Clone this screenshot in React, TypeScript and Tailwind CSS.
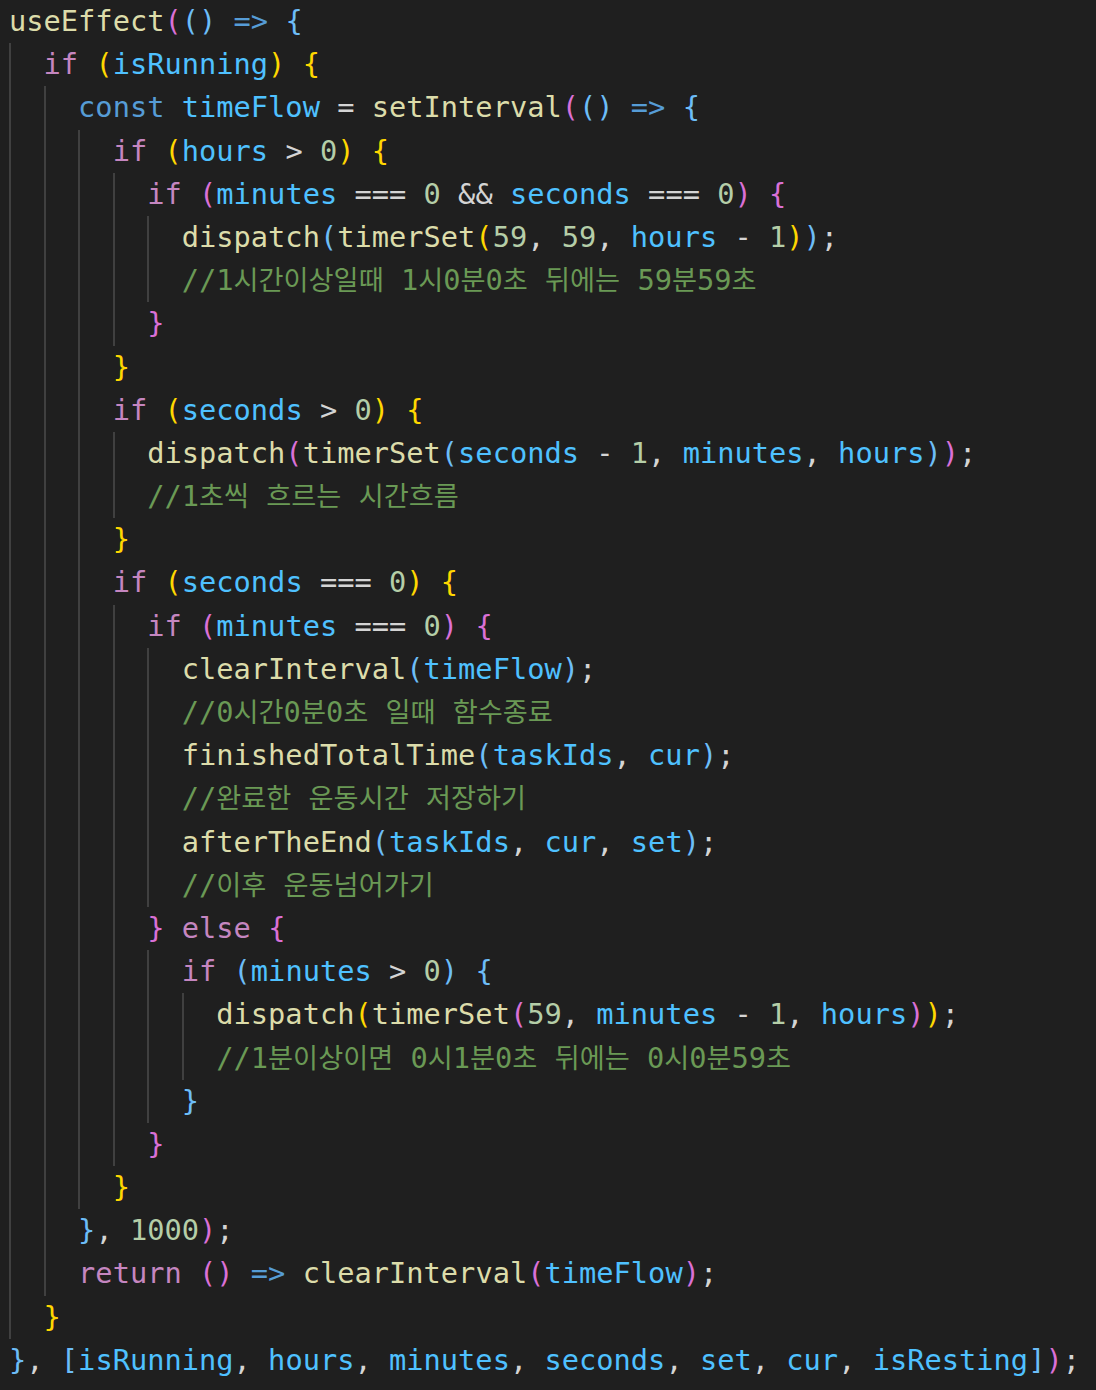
import React from "react";

type Tok = [string, string];
type Line = { i: number; t: Tok[] };

const CLS: Record<string, string> = {
  k: "text-[#C586C0]",
  s: "text-[#569CD6]",
  v: "text-[#4FC1FF]",
  f: "text-[#DCDCAA]",
  n: "text-[#B5CEA8]",
  c: "text-[#6A9955]",
  p: "text-[#D4D4D4]",
  g: "text-[#FFD700]",
  o: "text-[#DA70D6]",
  b: "text-[#6DBDF7]",
};

const lines: Line[] = [
  { i: 0, t: [["f", "useEffect"], ["o", "("], ["b", "()"], ["p", " "], ["s", "=>"], ["p", " "], ["b", "{"]] },
  { i: 1, t: [["k", "if"], ["p", " "], ["g", "("], ["v", "isRunning"], ["g", ")"], ["p", " "], ["g", "{"]] },
  { i: 2, t: [["s", "const"], ["p", " "], ["v", "timeFlow"], ["p", " = "], ["f", "setInterval"], ["o", "("], ["b", "()"], ["p", " "], ["s", "=>"], ["p", " "], ["b", "{"]] },
  { i: 3, t: [["k", "if"], ["p", " "], ["g", "("], ["v", "hours"], ["p", " > "], ["n", "0"], ["g", ")"], ["p", " "], ["g", "{"]] },
  { i: 4, t: [["k", "if"], ["p", " "], ["o", "("], ["v", "minutes"], ["p", " === "], ["n", "0"], ["p", " && "], ["v", "seconds"], ["p", " === "], ["n", "0"], ["o", ")"], ["p", " "], ["o", "{"]] },
  { i: 5, t: [["f", "dispatch"], ["b", "("], ["f", "timerSet"], ["g", "("], ["n", "59"], ["p", ", "], ["n", "59"], ["p", ", "], ["v", "hours"], ["p", " - "], ["n", "1"], ["g", ")"], ["b", ")"], ["p", ";"]] },
  { i: 5, t: [["c", "//1시간이상일때 1시0분0초 뒤에는 59분59초"]] },
  { i: 4, t: [["o", "}"]] },
  { i: 3, t: [["g", "}"]] },
  { i: 3, t: [["k", "if"], ["p", " "], ["g", "("], ["v", "seconds"], ["p", " > "], ["n", "0"], ["g", ")"], ["p", " "], ["g", "{"]] },
  { i: 4, t: [["f", "dispatch"], ["o", "("], ["f", "timerSet"], ["b", "("], ["v", "seconds"], ["p", " - "], ["n", "1"], ["p", ", "], ["v", "minutes"], ["p", ", "], ["v", "hours"], ["b", ")"], ["o", ")"], ["p", ";"]] },
  { i: 4, t: [["c", "//1초씩 흐르는 시간흐름"]] },
  { i: 3, t: [["g", "}"]] },
  { i: 3, t: [["k", "if"], ["p", " "], ["g", "("], ["v", "seconds"], ["p", " === "], ["n", "0"], ["g", ")"], ["p", " "], ["g", "{"]] },
  { i: 4, t: [["k", "if"], ["p", " "], ["o", "("], ["v", "minutes"], ["p", " === "], ["n", "0"], ["o", ")"], ["p", " "], ["o", "{"]] },
  { i: 5, t: [["f", "clearInterval"], ["b", "("], ["v", "timeFlow"], ["b", ")"], ["p", ";"]] },
  { i: 5, t: [["c", "//0시간0분0초 일때 함수종료"]] },
  { i: 5, t: [["f", "finishedTotalTime"], ["b", "("], ["v", "taskIds"], ["p", ", "], ["v", "cur"], ["b", ")"], ["p", ";"]] },
  { i: 5, t: [["c", "//완료한 운동시간 저장하기"]] },
  { i: 5, t: [["f", "afterTheEnd"], ["b", "("], ["v", "taskIds"], ["p", ", "], ["v", "cur"], ["p", ", "], ["v", "set"], ["b", ")"], ["p", ";"]] },
  { i: 5, t: [["c", "//이후 운동넘어가기"]] },
  { i: 4, t: [["o", "}"], ["p", " "], ["k", "else"], ["p", " "], ["o", "{"]] },
  { i: 5, t: [["k", "if"], ["p", " "], ["b", "("], ["v", "minutes"], ["p", " > "], ["n", "0"], ["b", ")"], ["p", " "], ["b", "{"]] },
  { i: 6, t: [["f", "dispatch"], ["g", "("], ["f", "timerSet"], ["o", "("], ["n", "59"], ["p", ", "], ["v", "minutes"], ["p", " - "], ["n", "1"], ["p", ", "], ["v", "hours"], ["o", ")"], ["g", ")"], ["p", ";"]] },
  { i: 6, t: [["c", "//1분이상이면 0시1분0초 뒤에는 0시0분59초"]] },
  { i: 5, t: [["b", "}"]] },
  { i: 4, t: [["o", "}"]] },
  { i: 3, t: [["g", "}"]] },
  { i: 2, t: [["b", "}"], ["p", ", "], ["n", "1000"], ["o", ")"], ["p", ";"]] },
  { i: 2, t: [["k", "return"], ["p", " "], ["o", "()"], ["p", " "], ["s", "=>"], ["p", " "], ["f", "clearInterval"], ["o", "("], ["v", "timeFlow"], ["o", ")"], ["p", ";"]] },
  { i: 1, t: [["g", "}"]] },
  { i: 0, t: [["b", "}"], ["p", ", "], ["b", "["], ["v", "isRunning"], ["p", ", "], ["v", "hours"], ["p", ", "], ["v", "minutes"], ["p", ", "], ["v", "seconds"], ["p", ", "], ["v", "set"], ["p", ", "], ["v", "cur"], ["p", ", "], ["v", "isResting"], ["b", "]"], ["o", ")"], ["p", ";"]] },
];

function renderText(text: string) {
  const parts = text.split(/([\uAC00-\uD7A3]+)/);
  return parts.map((part, idx) =>
    /[\uAC00-\uD7A3]/.test(part) ? (
      <span key={idx} className="text-[27.2px]">
        {part}
      </span>
    ) : (
      <React.Fragment key={idx}>{part}</React.Fragment>
    )
  );
}

export default function App() {
  return (
    <div
      className="w-[1096px] h-[1390px] bg-[#1f1f1f] overflow-hidden"
      style={{ fontFamily: '"DejaVu Sans Mono", "Noto Sans CJK KR", monospace' }}
    >
      <div className="flex flex-col pl-[9px]">
        {lines.map((line, li) => (
          <div key={li} className="flex h-[43.2px] items-stretch">
            {Array.from({ length: line.i }).map((_, k) => (
              <span
                key={k}
                className="w-[34.56px] shrink-0 border-l-2 border-[#404040] box-border"
              />
            ))}
            <span className="whitespace-pre text-[28.7px] leading-[43.2px]">
              {line.t.map(([type, text], ti) => (
                <span key={ti} className={CLS[type]}>
                  {renderText(text)}
                </span>
              ))}
            </span>
          </div>
        ))}
      </div>
    </div>
  );
}
